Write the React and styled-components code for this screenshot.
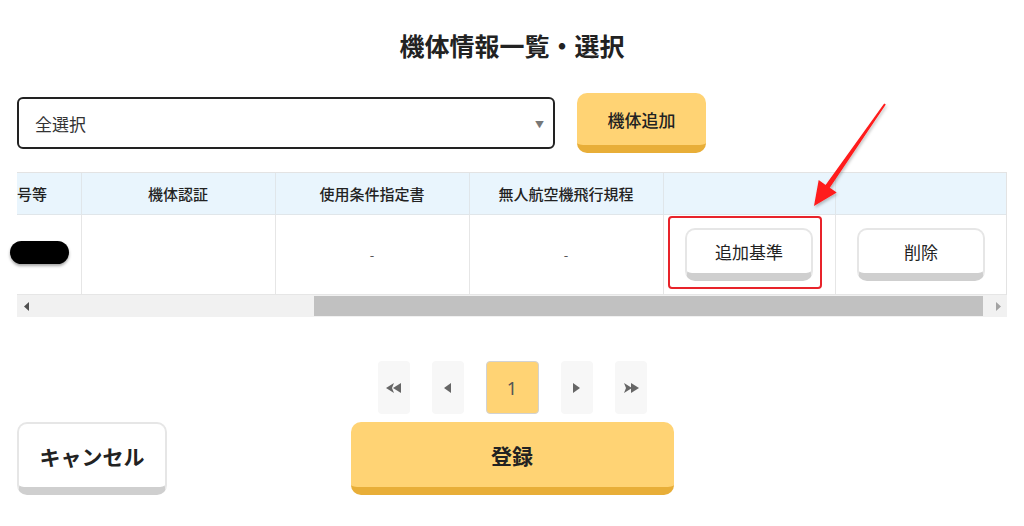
import React from "react";
import styled, { createGlobalStyle } from "styled-components";

const GlobalStyle = createGlobalStyle`
  html, body {
    margin: 0;
    padding: 0;
    background: #ffffff;
  }
  body {
    font-family: "Noto Sans CJK JP", "Noto Sans", sans-serif;
    color: #222;
  }
`;

const Page = styled.div`
  position: relative;
  width: 1024px;
  height: 526px;
  box-sizing: border-box;
  padding: 0 17px;
  overflow: hidden;
`;

const Title = styled.h1`
  margin: 0;
  padding-top: 28px;
  font-size: 25px;
  line-height: 34px;
  font-weight: 700;
  text-align: center;
  color: #222;
`;

const Toolbar = styled.div`
  display: flex;
  align-items: center;
  gap: 22px;
  margin-top: 31px;
`;

const SelectBox = styled.div`
  display: flex;
  align-items: center;
  justify-content: space-between;
  box-sizing: border-box;
  width: 538px;
  height: 52px;
  padding: 0 9px 0 16px;
  border: 2px solid #222;
  border-radius: 6px;
  font-size: 17px;
  color: #333;
`;

const Caret = styled.span`
  font-size: 9px;
  color: #777;
  margin-top: 2px;
`;

const YellowButton = styled.button`
  display: flex;
  align-items: center;
  justify-content: center;
  box-sizing: border-box;
  width: ${(p) => p.$w}px;
  height: ${(p) => p.$h}px;
  padding: 0;
  border: none;
  border-bottom: 8px solid #e8ae38;
  border-radius: 10px;
  background: #ffd374;
  font-family: inherit;
  font-size: ${(p) => p.$fs}px;
  font-weight: ${(p) => p.$weight || 700};
  color: #222;
`;

const WhiteButton = styled.button`
  display: flex;
  align-items: center;
  justify-content: center;
  box-sizing: border-box;
  width: ${(p) => p.$w}px;
  height: ${(p) => p.$h}px;
  padding: 0;
  border: 2px solid #e6e6e6;
  border-bottom: 8px solid #cfcfcf;
  border-radius: 10px;
  background: #ffffff;
  font-family: inherit;
  font-size: ${(p) => p.$fs}px;
  font-weight: ${(p) => p.$weight || 400};
  color: #222;
`;

const TableWrap = styled.div`
  position: relative;
  margin-top: 19px;
`;

const TableClip = styled.div`
  overflow: hidden;
  border-top: 1px solid #e3e3e3;
  border-right: 1px solid #e3e3e3;
`;

const Table = styled.table`
  border-collapse: collapse;
  table-layout: fixed;
  width: 990px;
`;

const Th = styled.th`
  height: 41px;
  padding: 0;
  background: #e9f5fd;
  border-right: 1px solid #e0e6ea;
  border-bottom: 1px solid #e0e6ea;
  font-size: 15px;
  font-weight: 500;
  color: #222;
  text-align: ${(p) => (p.$left ? "left" : "center")};
  white-space: nowrap;
`;

const Td = styled.td`
  position: relative;
  height: 79px;
  padding: 0;
  border-right: 1px solid #e6e6e6;
  border-bottom: 1px solid #e6e6e6;
  font-size: 13px;
  color: #555;
  text-align: center;
  vertical-align: middle;
`;

const CellCenter = styled.div`
  display: flex;
  justify-content: center;
  align-items: center;
`;

const Highlight = styled.div`
  position: absolute;
  left: 4px;
  right: 13px;
  top: 1px;
  bottom: 5px;
  border: 2px solid #e8232a;
  border-radius: 4px;
  pointer-events: none;
`;

const Redaction = styled.div`
  position: absolute;
  left: -7px;
  top: 69px;
  width: 59px;
  height: 23px;
  border-radius: 12px;
  background: #000;
  box-shadow: 0 2px 3px rgba(0, 0, 0, 0.35);
`;

const ScrollBar = styled.div`
  display: flex;
  align-items: stretch;
  height: 22px;
  background: #f1f1f1;
`;

const ScrollArrow = styled.div`
  display: flex;
  align-items: center;
  justify-content: center;
  width: 18px;
`;

const ScrollTrack = styled.div`
  flex: 1;
  display: flex;
  padding: 1px 0;
`;

const ScrollThumb = styled.div`
  margin-left: 279px;
  width: 669px;
  background: #c1c1c1;
`;

const Pager = styled.div`
  display: flex;
  justify-content: center;
  gap: 22px;
  margin-top: 44px;
`;

const PageBtn = styled.div`
  display: flex;
  align-items: center;
  justify-content: center;
  box-sizing: border-box;
  width: ${(p) => (p.$active ? 53 : 32)}px;
  height: 53px;
  border-radius: 4px;
  background: ${(p) => (p.$active ? "#ffd374" : "#f7f7f7")};
  border: ${(p) => (p.$active ? "1px solid #d2d2d2" : "none")};
  font-family: "Noto Sans", sans-serif;
  font-size: 18px;
  color: #555;
`;

const Footer = styled.div`
  display: grid;
  grid-template-columns: 1fr 323px 1fr;
  margin-top: 8px;
`;

const Arrow = styled.svg`
  position: absolute;
  left: 0;
  top: 0;
  pointer-events: none;
`;

const Tri = ({ dir = "left", color = "#666", w = 7, h = 10 }) => (
  <svg width={w} height={h} viewBox={`0 0 ${w} ${h}`}>
    {dir === "left" ? (
      <path d={`M0 ${h / 2} L${w} 0 L${w} ${h} Z`} fill={color} />
    ) : (
      <path d={`M0 0 L${w} ${h / 2} L0 ${h} Z`} fill={color} />
    )}
  </svg>
);

const DoubleTri = ({ dir = "left" }) => (
  <svg width="16" height="10" viewBox="0 0 16 10">
    {dir === "left" ? (
      <>
        <path d="M0 5 L8 0 L6 5 L8 10 Z" fill="#666" />
        <path d="M7 5 L15 0 L15 10 Z" fill="#666" />
      </>
    ) : (
      <>
        <path d="M1 0 L9 5 L1 10 L3 5 Z" fill="#666" />
        <path d="M8 0 L16 5 L8 10 Z" fill="#666" />
      </>
    )}
  </svg>
);

const headers = ["機体認証", "使用条件指定書", "無人航空機飛行規程", "", ""];
const widths = [64, 194, 194, 194, 172, 172];

export default function App() {
  return (
    <Page>
      <GlobalStyle />
      <Title>機体情報一覧・選択</Title>

      <Toolbar>
        <SelectBox>
          <span>全選択</span>
          <Caret>▼</Caret>
        </SelectBox>
        <YellowButton $w={129} $h={60} $fs={17} $weight={500}>
          機体追加
        </YellowButton>
      </Toolbar>

      <TableWrap>
        <TableClip>
          <Table>
            <colgroup>
              {widths.map((w, i) => (
                <col key={i} style={{ width: w }} />
              ))}
            </colgroup>
            <thead>
              <tr>
                <Th $left>号等</Th>
                {headers.map((h, i) => (
                  <Th key={i}>{h}</Th>
                ))}
              </tr>
            </thead>
            <tbody>
              <tr>
                <Td></Td>
                <Td></Td>
                <Td>-</Td>
                <Td>-</Td>
                <Td>
                  <CellCenter>
                    <WhiteButton $w={128} $h={53} $fs={17}>
                      追加基準
                    </WhiteButton>
                  </CellCenter>
                  <Highlight />
                </Td>
                <Td>
                  <CellCenter>
                    <WhiteButton $w={128} $h={53} $fs={17}>
                      削除
                    </WhiteButton>
                  </CellCenter>
                </Td>
              </tr>
            </tbody>
          </Table>
        </TableClip>
        <ScrollBar>
          <ScrollArrow>
            <Tri dir="left" color="#505050" w={5} h={9} />
          </ScrollArrow>
          <ScrollTrack>
            <ScrollThumb />
          </ScrollTrack>
          <ScrollArrow>
            <Tri dir="right" color="#a3a3a3" w={5} h={9} />
          </ScrollArrow>
        </ScrollBar>
        <Redaction />
      </TableWrap>

      <Pager>
        <PageBtn>
          <DoubleTri dir="left" />
        </PageBtn>
        <PageBtn>
          <Tri dir="left" />
        </PageBtn>
        <PageBtn $active>1</PageBtn>
        <PageBtn>
          <Tri dir="right" />
        </PageBtn>
        <PageBtn>
          <DoubleTri dir="right" />
        </PageBtn>
      </Pager>

      <Footer>
        <div>
          <WhiteButton $w={150} $h={73} $fs={21} $weight={700}>
            キャンセル
          </WhiteButton>
        </div>
        <YellowButton $w={323} $h={73} $fs={21}>
          登録
        </YellowButton>
        <div />
      </Footer>

      <Arrow width="1024" height="526" viewBox="0 0 1024 526">
        <defs>
          <filter id="shadow" x="-20%" y="-20%" width="140%" height="140%">
            <feDropShadow dx="1" dy="2" stdDeviation="1.5" floodColor="#000" floodOpacity="0.25" />
          </filter>
        </defs>
        <polygon
          points="814,206 818.7,180 825.6,184.9 884.2,103.4 885.8,104.6 829.8,187.7 836.7,192.6"
          fill="#ff1a1a"
          filter="url(#shadow)"
        />
      </Arrow>
    </Page>
  );
}
